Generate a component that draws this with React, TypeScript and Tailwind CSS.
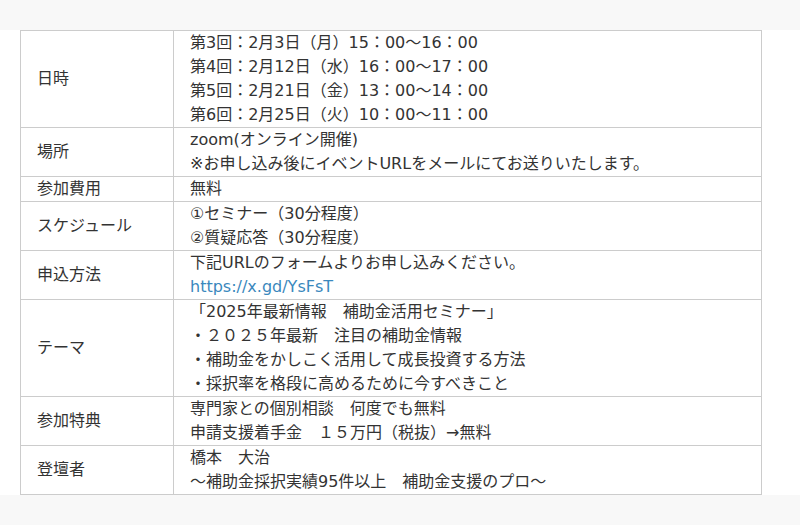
import React from "react";

type Row = { label: string; lines: React.ReactNode[] };

const rows: Row[] = [
  {
    label: "日時",
    lines: [
      "第3回：2月3日（月）15：00〜16：00",
      "第4回：2月12日（水）16：00〜17：00",
      "第5回：2月21日（金）13：00〜14：00",
      "第6回：2月25日（火）10：00〜11：00",
    ],
  },
  {
    label: "場所",
    lines: ["zoom(オンライン開催)", "※お申し込み後にイベントURLをメールにてお送りいたします。"],
  },
  { label: "参加費用", lines: ["無料"] },
  { label: "スケジュール", lines: ["①セミナー（30分程度）", "②質疑応答（30分程度）"] },
  {
    label: "申込方法",
    lines: [
      "下記URLのフォームよりお申し込みください。",
      <a key="l" href="#" className="text-[#3a88bd]">
        https://x.gd/YsFsT
      </a>,
    ],
  },
  {
    label: "テーマ",
    lines: [
      "「2025年最新情報　補助金活用セミナー」",
      "・２０２５年最新　注目の補助金情報",
      "・補助金をかしこく活用して成長投資する方法",
      "・採択率を格段に高めるために今すべきこと",
    ],
  },
  { label: "参加特典", lines: ["専門家との個別相談　何度でも無料", "申請支援着手金　１５万円（税抜）→無料"] },
  { label: "登壇者", lines: ["橋本　大治", "〜補助金採択実績95件以上　補助金支援のプロ〜"] },
];

export default function App() {
  return (
    <div
      className="w-[800px] h-[525px] bg-[#f8f8f8] pt-[30px] text-[16px] leading-[24px] text-[#333333]"
      style={{ fontFamily: '"DejaVu Sans", "Noto Sans CJK JP", sans-serif' }}
    >
      <div className="bg-white h-[465px] pl-[20px]">
        <table className="border-collapse w-[742px]">
          <colgroup>
            <col className="w-[153px]" />
            <col />
          </colgroup>
          <tbody>
            {rows.map((r) => (
              <tr key={r.label}>
                <td className="border border-[#cccccc] px-4 py-0 align-middle">{r.label}</td>
                <td className="border border-[#cccccc] px-4 py-0 align-middle">
                  {r.lines.map((l, i) => (
                    <div key={i} className="whitespace-nowrap">
                      {l}
                    </div>
                  ))}
                </td>
              </tr>
            ))}
          </tbody>
        </table>
      </div>
    </div>
  );
}
